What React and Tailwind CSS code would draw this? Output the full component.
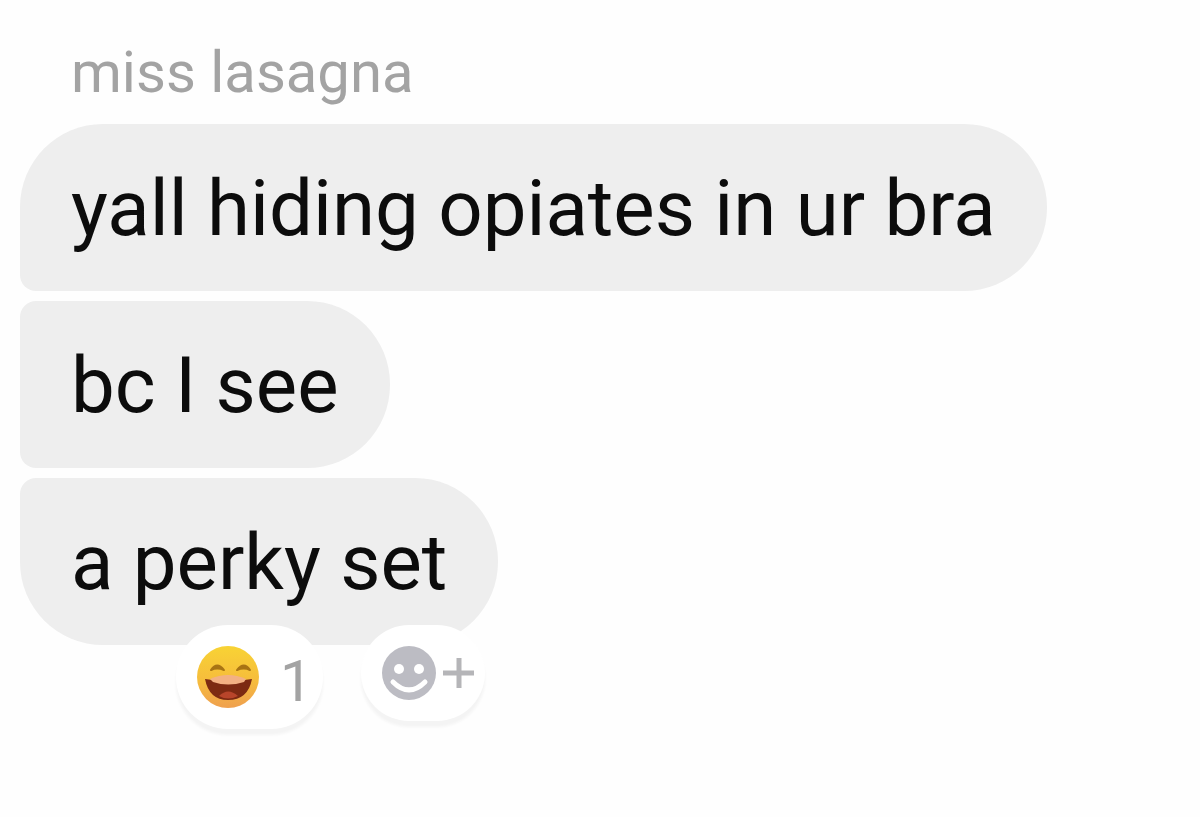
import React from 'react';

const messages = [
    { id: 1, text: 'yall hiding opiates in ur bra', corners: 'rounded-l-[16px] rounded-r-[83px] rounded-tl-[83px]' },
    { id: 2, text: 'bc I see', corners: 'rounded-l-[16px] rounded-r-[83px]' },
    { id: 3, text: 'a perky set', corners: 'rounded-l-[16px] rounded-r-[83px] rounded-bl-[83px]' },
];

const LaughIcon = () => (
    <svg viewBox="0 0 64 64" className="size-16 shrink-0" aria-hidden="true">
        <defs>
            <linearGradient id="face" x1="0" y1="0" x2="0" y2="1">
                <stop offset="0" stopColor="#f8d334" />
                <stop offset="0.55" stopColor="#f6bd3c" />
                <stop offset="1" stopColor="#efa04f" />
            </linearGradient>
        </defs>
        <circle cx="32" cy="32" r="31" fill="url(#face)" />
        {/* Eyes */}
        <path d="M15 25 Q21 16 28 25 Q21 22 15 25Z" fill="#a87414" stroke="#a87414" strokeWidth="2" strokeLinejoin="round" />
        <path d="M41 25 Q48 16 54 25 Q48 22 41 25Z" fill="#a87414" stroke="#a87414" strokeWidth="2" strokeLinejoin="round" />
        {/* Mouth */}
        <path d="M9 34 Q32 38 56 34 Q52 55 32 55 Q13 55 9 34Z" fill="#7d2a12" />
        <path d="M14 34 Q32 26 50 34 L48 37 Q32 42 17 37Z" fill="#f3b183" />
        <path d="M23 51 Q32 42 42 51 Q32 56 23 51Z" fill="#b8452a" />
    </svg>
);

const AddReactionIcon = () => (
    <svg viewBox="0 0 94 56" className="h-14 w-[94px] shrink-0" aria-hidden="true">
        <circle cx="28" cy="28" r="27" fill="#bcbcc3" />
        <circle cx="18" cy="24" r="5" fill="#fff" />
        <circle cx="38" cy="24" r="5" fill="#fff" />
        <path d="M12 37 Q28 53 44 37" fill="none" stroke="#fff" strokeWidth="5" strokeLinecap="round" />
        <path d="M62 28H93M78 13V43" stroke="#b5b5b8" strokeWidth="5" fill="none" />
    </svg>
);

const App = () => {
    return (
        <main className="min-h-screen bg-[#fefefe] px-5 pt-9 font-['Roboto',sans-serif]">
            <h1 className="pl-[51px] text-[58px] leading-[72px] text-[#a3a3a3]">miss lasagna</h1>

            <ul className="mt-4 flex flex-col items-start gap-[10px]">
                {messages.map((message) => (
                    <li key={message.id} className={`bg-[#eeeeee] px-[51px] pt-[41px] pb-[39px] text-[78px] leading-[87px] text-[#0c0c0c] ${message.corners}`}>
                        {message.text}
                    </li>
                ))}
            </ul>

            {/* Reactions overlap the last bubble */}
            <div className="relative -mt-5 flex items-start gap-[38px] pl-39">
                <button aria-label="Laughing, 1 reaction" className="flex h-26 items-center gap-5 rounded-full bg-white pr-[10px] pl-5 text-[58px] text-[#a3a3a3] shadow-[0_6px_3px_#f4f4f4]">
                    <LaughIcon />
                    <span className="pt-2">1</span>
                </button>
                <button aria-label="Add reaction" className="flex h-24 items-center rounded-full bg-white pr-[10px] pl-5 shadow-[0_6px_3px_#f4f4f4]">
                    <AddReactionIcon />
                </button>
            </div>
        </main>
    );
};

export default App;
